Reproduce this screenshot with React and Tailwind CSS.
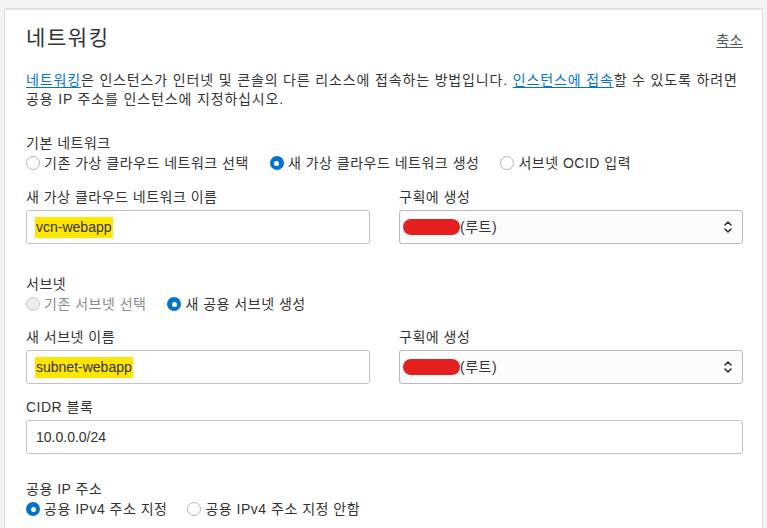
import React from 'react';

const font = { fontFamily: '"Liberation Sans", "Noto Sans CJK KR", sans-serif' };

const Radio = ({ label, checked, disabled }) => (
    <label className="flex items-center gap-[4px] h-[20px]">
        {checked ? (
            <span className="w-[14px] h-[14px] rounded-full bg-[#0572ce] flex items-center justify-center">
                <span className="w-[5px] h-[5px] rounded-full bg-white" />
            </span>
        ) : (
            <span
                className={`w-[14px] h-[14px] rounded-full border ${
                    disabled ? 'border-[#c8c8c8] bg-[#ececec]' : 'border-[#b4b4b4] bg-white'
                }`}
            />
        )}
        <span className={disabled ? 'text-[#8a8a8a]' : 'text-[#333]'}>{label}</span>
    </label>
);

const TextInput = ({ value, highlight }) => (
    <div className="h-[34px] border border-[#c2c2c8] rounded-[3px] bg-white flex items-center px-[8px] tracking-normal">
        <span className={highlight ? 'bg-[#ffe600] px-[1px] text-[#333]' : 'text-[#333] px-[1px]'}>{value}</span>
    </div>
);

const CompartmentSelect = () => (
    <div className="h-[34px] border border-[#b9b9c2] rounded-[3px] bg-[#fcfcfd] flex items-center pl-[3px] pr-[9px]">
        <span className="w-[57px] h-[16px] rounded-full bg-[#e41f1f]" />
        <span className="text-[#333]">(루트)</span>
        <svg className="ml-auto" width="10" height="16" viewBox="0 0 10 16" fill="none" stroke="#333" strokeWidth="1.6" strokeLinecap="round" strokeLinejoin="round">
            <path d="M2 6 L5 3 L8 6" />
            <path d="M2 10 L5 13 L8 10" />
        </svg>
    </div>
);

const Field = ({ label, children }) => (
    <div className="flex flex-col">
        <div className="h-[20px] leading-[20px] text-[#333] mb-[3px]">{label}</div>
        {children}
    </div>
);

export default function App() {
    return (
        <div className="w-[767px] h-[528px] overflow-hidden bg-[#f4f4f4] pt-[8px] pl-[4px] text-[14px] tracking-[0.5px]" style={font}>
            <div className="w-[759px] min-h-[560px] bg-white border border-[#dedede] border-t-2 border-t-[#e2e2e2] pt-[14px] pl-[21px] pr-[19px]">
                {/* Header */}
                <div className="flex items-baseline justify-between">
                    <h2 className="text-[21px] leading-[28px] text-[#333] font-normal tracking-[1.6px]">네트워킹</h2>
                    <a className="underline text-[#555] text-[14px] underline-offset-2">축소</a>
                </div>

                <p className="mt-[19px] leading-[19px] text-[#333] tracking-[0.85px]">
                    <a className="text-[#0572ce] underline underline-offset-2">네트워킹</a>은 인스턴스가 인터넷 및 콘솔의 다른 리소스에 접속하는 방법입니다.{' '}
                    <a className="text-[#0572ce] underline underline-offset-2">인스턴스에 접속</a>할 수 있도록 하려면
                    <br />
                    공용 IP 주소를 인스턴스에 지정하십시오.
                </p>

                {/* Primary network */}
                <div className="mt-[24px] h-[20px] leading-[20px] text-[#333]">기본 네트워크</div>
                <div className="flex gap-[21px]">
                    <Radio label="기존 가상 클라우드 네트워크 선택" />
                    <Radio label="새 가상 클라우드 네트워크 생성" checked />
                    <Radio label="서브넷 OCID 입력" />
                </div>

                <div className="grid grid-cols-2 gap-[29px] mt-[14px]">
                    <Field label="새 가상 클라우드 네트워크 이름">
                        <TextInput value="vcn-webapp" highlight />
                    </Field>
                    <Field label="구획에 생성">
                        <CompartmentSelect />
                    </Field>
                </div>

                {/* Subnet */}
                <div className="mt-[30px] h-[20px] leading-[20px] text-[#333]">서브넷</div>
                <div className="flex gap-[21px]">
                    <Radio label="기존 서브넷 선택" disabled />
                    <Radio label="새 공용 서브넷 생성" checked />
                </div>

                <div className="grid grid-cols-2 gap-[29px] mt-[13px]">
                    <Field label="새 서브넷 이름">
                        <TextInput value="subnet-webapp" highlight />
                    </Field>
                    <Field label="구획에 생성">
                        <CompartmentSelect />
                    </Field>
                </div>

                <div className="mt-[13px]">
                    <Field label="CIDR 블록">
                        <TextInput value="10.0.0.0/24" />
                    </Field>
                </div>

                {/* Public IP */}
                <div className="mt-[25px] h-[20px] leading-[20px] text-[#333]">공용 IP 주소</div>
                <div className="flex gap-[20px]">
                    <Radio label="공용 IPv4 주소 지정" checked />
                    <Radio label="공용 IPv4 주소 지정 안함" />
                </div>
            </div>
        </div>
    );
}
